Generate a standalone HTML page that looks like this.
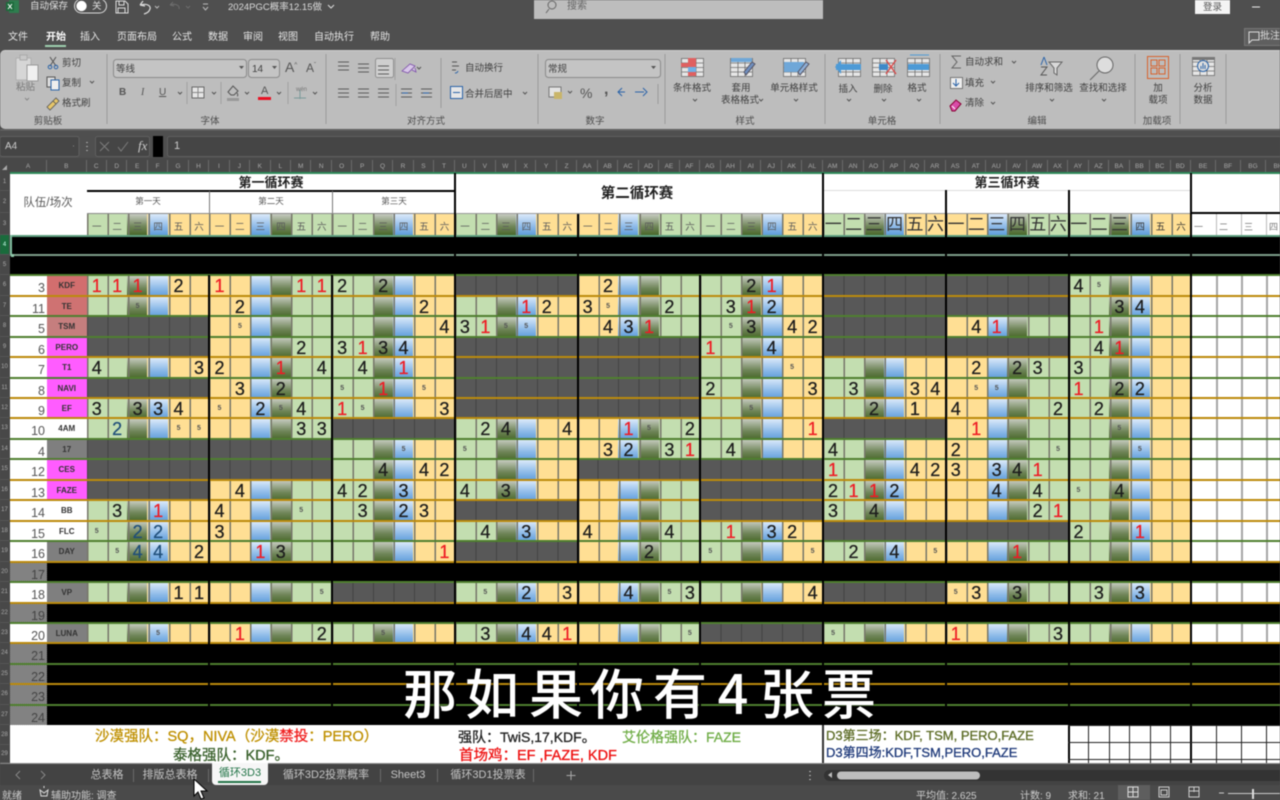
<!DOCTYPE html>
<html lang="zh"><head><meta charset="utf-8"><title>2024PGC概率12.15做</title>
<style>
*{margin:0;padding:0;box-sizing:border-box}
html,body{width:1280px;height:800px;overflow:hidden;background:#4f4f4f}
body{font-family:"Liberation Sans","Noto Sans CJK SC",sans-serif}
#w{position:relative;width:1280px;height:800px;overflow:hidden;filter:blur(.45px)}
.t{position:absolute;white-space:nowrap;line-height:1}
.c{transform:translateX(-50%)}
.box{position:absolute}
/* ribbon text */
.m{color:#e4e4e4;font-size:10px;margin-top:2px}
.k{color:#3f3f3f;font-size:9.5px;margin-top:2px}
.v{color:#4c4c4c;font-size:9.5px;margin-top:3px}
/* sheet */
.bk{position:absolute;width:122.75px;--h:20.45px}
.bk:after{content:"";position:absolute;inset:0;background:repeating-linear-gradient(90deg,#77776a 0 1.5px,transparent 1.5px 20.458px)}
.p1{background:linear-gradient(#c6cbc0,#6f8558 60%,#4a682b) 40.92px 0/20.46px var(--h) repeat-y,linear-gradient(#dceafa,#8dbae8 60%,#5f9ddb) 61.38px 0/20.46px var(--h) repeat-y,linear-gradient(90deg,#c3deb0 40.92px,#ffdf94 40.92px)}
.p2{background:linear-gradient(#dceafa,#8dbae8 60%,#5f9ddb) 40.92px 0/20.46px var(--h) repeat-y,linear-gradient(#c6cbc0,#6f8558 60%,#4a682b) 61.38px 0/20.46px var(--h) repeat-y,linear-gradient(90deg,#ffdf94 40.92px,#c3deb0 40.92px)}
.hd{top:214px;height:21px;--h:21px;display:grid;grid-template-columns:repeat(6,20.458px)}
.hd em{font-style:normal;font-size:9.5px;color:#5a5a5a;text-align:center;line-height:27px;position:relative;z-index:1;font-family:"Liberation Sans","Noto Sans CJK SC",sans-serif}
.hd.big em{font-size:17px;line-height:21px;color:#333}
.col{top:276px;height:450px}
.r{position:absolute;left:86.5px;width:1104.75px;height:19.45px;top:calc(276.3px + 20.45px*var(--k));display:grid;grid-template-columns:repeat(54,20.458px)}
.r>*{grid-row:1}
.r i{font-style:normal;font-size:18px;line-height:20px;text-align:center;color:#1c1c1c;-webkit-text-stroke:.25px currentColor}
.r i.e{color:#ee1c25}
.r i.u{color:#1f4e79}
.r i.s{font-size:7px;color:#555;font-weight:bold;-webkit-text-stroke:0}
.r s{display:block;text-decoration:none;background:repeating-linear-gradient(90deg,#444 0 1px,#585858 1px 20.458px)}
.g1{grid-column:1/7}.g2{grid-column:7/13}.g3{grid-column:13/19}.g4{grid-column:19/25}.g5{grid-column:25/31}.g6{grid-column:31/37}.g7{grid-column:37/43}.g8{grid-column:43/49}.g9{grid-column:49/55}
.bl{position:absolute;left:47px;right:0;height:20.45px;top:calc(275.3px + 20.45px*var(--k));background:#000}
.l{position:absolute;left:10px;right:0;height:2px;top:calc(274.3px + 20.45px*var(--k))}
.go{background:#bb8a0c}.gr{background:#4f7f2f}
.vl{position:absolute;width:2px;background:#000}
.a{position:absolute;left:10px;width:37px;height:20.45px;top:calc(275.3px + 20.45px*var(--k));text-align:right;padding-right:2px;font-size:12.5px;color:#555;line-height:26px}
.a.x{background:repeating-conic-gradient(#767676 0 25%,#8e8e8e 0 50%) 0 0/2px 2px;color:#444}
.n{position:absolute;left:47px;width:39.5px;height:19.45px;top:calc(276.3px + 20.45px*var(--k));font-size:8px;font-weight:bold;color:#333;text-align:center;line-height:19px}
.rh{position:absolute;left:0;width:9px;font-size:6px;color:#aaa;text-align:center;height:20.45px;line-height:20px;top:calc(275.3px + 20.45px*var(--k));border-bottom:1px solid #555;background:#484848}
.ch{position:absolute;top:160px;left:86.5px;height:12px;display:grid;grid-template-columns:repeat(54,20.458px) repeat(4,25px);font-size:6.5px;color:#a8a8a8;text-align:center;line-height:13px}
.ch span{border-right:1px solid #6a6a6a}
.note{font-size:14.5px;line-height:1;position:absolute;white-space:nowrap;-webkit-text-stroke:.3px currentColor}
.tab{color:#c4c4c4;font-size:11px}
.sub span{position:absolute;top:0;transform:translateX(-50%);font-size:54px;line-height:54px;color:#fff;font-weight:500;text-shadow:0 0 2px #000}
</style></head><body><div id="w">

<!-- title bar -->
<div class="box" style="left:534px;top:0;width:289px;height:19px;background:#bdbdbd"></div>
<div class="box" style="left:1195px;top:0;width:35px;height:14px;background:#f4f4f4"></div>
<div class="t" style="left:30px;top:2px;color:#e0e0e0;font-size:9.5px">自动保存</div>
<div class="t" style="left:92px;top:2px;color:#ddd;font-size:9.5px">关</div>
<div class="t" style="left:228px;top:3px;color:#dcdcdc;font-size:9.5px">2024PGC概率12.15做</div>
<div class="t" style="left:567px;top:2px;color:#666;font-size:10px">搜索</div>
<div class="t" style="left:1203px;top:3px;color:#555;font-size:9.5px">登录</div>

<!-- menu -->
<div class="t m c" style="left:18px;top:31px">文件</div>
<div class="t m c" style="left:56px;top:31px;font-weight:bold;color:#fff">开始</div>
<div class="box" style="left:45px;top:45px;width:21px;height:2px;background:#9fd0b0"></div>
<div class="t m c" style="left:90px;top:31px">插入</div>
<div class="t m c" style="left:137px;top:31px">页面布局</div>
<div class="t m c" style="left:182px;top:31px">公式</div>
<div class="t m c" style="left:218px;top:31px">数据</div>
<div class="t m c" style="left:253px;top:31px">审阅</div>
<div class="t m c" style="left:288px;top:31px">视图</div>
<div class="t m c" style="left:334px;top:31px">自动执行</div>
<div class="t m c" style="left:380px;top:31px">帮助</div>
<div class="box" style="left:1244px;top:28px;width:40px;height:18px;background:#5f5f5f;border:1px solid #777"></div>
<div class="t" style="left:1260px;top:32px;color:#ddd;font-size:10px">批注</div>

<!-- ribbon -->
<div class="box" style="left:0;top:50px;width:1290px;height:79px;background:#bdbdbd;border-radius:5px;border-top:1px solid #d0d0d0"></div>

<svg class="box" style="left:0;top:0" width="1280" height="160" viewBox="0 0 1280 160" fill="none">
 <defs>
  <g id="tile" stroke="#6d6d6d" stroke-width=".8"><rect x=".5" y=".5" width="22" height="18" fill="#e6e6e6"/><path d="M8 .5v18M15 .5v18M.5 5h22M.5 9.5h22M.5 14h22"/></g>
  <g id="l3" stroke="#5c5c5c" stroke-width="1"><path d="M0 0h11M0 4h11M0 8h11"/></g>
 </defs>
 <!-- logo -->
 <rect x="9" y="0" width="10" height="13" fill="#2f7d4f"/><rect x="6" y="2" width="8" height="9" fill="#1d6b3c"/><path d="M8 4l4 5M12 4l-4 5" stroke="#fff"/>
 <!-- toggle -->
 <rect x="74.5" y="-1" width="32" height="14" rx="7" stroke="#ddd"/><circle cx="81.5" cy="6" r="5.2" fill="#fff"/>
 <!-- save -->
 <path d="M116 1h9l3 3v9h-12zM119 1v4h5V1M118 13V8h7v5" stroke="#ddd"/>
 <!-- undo redo -->
 <path d="M140 5l3-4M140 5l5 1M141 5c6-2 10 1 9 4s-3 4-6 5" stroke="#ddd" stroke-width="1.2"/>
 <path d="M155 6l2 2 2-2" stroke="#bbb"/>
 <path d="M170 5l3-3M170 5l4 1M171 5c5-2 9 1 8 4" stroke="#6d6d6d"/>
 <path d="M186 6l2 2 2-2" stroke="#6d6d6d"/>
 <path d="M203 4h5M203 7l2.500 3 2.500-3" stroke="#bbb"/>
 <path d="M328 5l3 3 3-3" stroke="#ddd"/>
 <!-- search -->
 <circle cx="552" cy="5" r="4" stroke="#666"/><path d="M549 9l-3 4" stroke="#666"/>
 <!-- min -->
 <path d="M1252 7h8" stroke="#eee"/>
 <path d="M1249 32h10v8h-7l-3 3z" stroke="#ddd"/>

 <!-- separators -->
 <path d="M107 54v70M326 54v70M538 54v70M665 54v70M825 54v70M940 54v70M1135 54v70M1180 54v70M1226 54v70M441 58v50" stroke="#9a9a9a"/>
 <!-- paste -->
 <rect x="16" y="58" width="15" height="22" fill="#d6d6d6" stroke="#b0b0b0"/><rect x="20" y="55" width="7" height="5" fill="#c8c8c8" stroke="#aaa"/><rect x="27" y="65" width="11" height="16" fill="#f0f0f0" stroke="#999"/>
 <path d="M25 98l2 2 2-2" stroke="#888"/>
 <!-- scissors -->
 <path d="M50 57l6 9M56 57l-6 9" stroke="#555"/><circle cx="50" cy="67" r="1.8" stroke="#2a63a8"/><circle cx="56" cy="67" r="1.8" stroke="#2a63a8"/>
 <!-- copy -->
 <rect x="47" y="77" width="8" height="10" stroke="#555" fill="#ddd"/><rect x="51" y="80" width="8" height="10" stroke="#2a63a8" fill="#eee"/>
 <path d="M90 81l2 2 2-2" stroke="#555"/>
 <!-- brush -->
 <path d="M47 107l6-6 3 3-6 6zM53 101l3-3 3 3-3 3" fill="#e6c66a" stroke="#555" stroke-width=".8"/>
 <!-- font boxes -->
 <rect x="113.5" y="59.5" width="133" height="18" rx="3" fill="#c4c4c4" stroke="#8a8a8a"/>
 <rect x="248.5" y="59.5" width="31" height="18" rx="3" fill="#c4c4c4" stroke="#8a8a8a"/>
 <path d="M239 66l2.500 3 2.500-3M272 66l2.500 3 2.500-3" fill="#555"/>
 <path d="M178 92l2 2 2-2M212 92l2 2 2-2M245 92l2 2 2-2M277 92l2 2 2-2M313 92l2 2 2-2" stroke="#555"/>
 <path d="M187 82v22M221 82v22M288 82v22M395 58v22M396 84v22" stroke="#a0a0a0"/>
 <rect x="192" y="87" width="12" height="11" fill="#e6e6e6" stroke="#666"/><path d="M198 87v11M192 92.500h12" stroke="#888"/>
 <path d="M228 92l5-6 5 5-4 4h-3zM237 93c1 1 1 3 0 3" stroke="#555"/><rect x="227" y="98" width="12" height="3" fill="#999"/>
 <rect x="258" y="97" width="13" height="3" fill="#e81123"/>
 <path d="M294 98h12M300 90v9" stroke="#7a9a9a"/>
 <!-- align rows -->
 <use href="#l3" x="338" y="62"/><use href="#l3" x="358" y="64"/>
 <rect x="375.5" y="58.5" width="18" height="19" rx="2" fill="#cfcfcf" stroke="#8f8f8f"/><use href="#l3" x="378" y="66"/>
 <path d="M402 71l8-7 5 2-7 7zM412 70l4 2-1-4" stroke="#7a4ca8" fill="#d8c7e8" stroke-width=".8"/>
 <path d="M417 67l2 2 2-2" stroke="#555"/>
 <use href="#l3" x="338" y="89"/><use href="#l3" x="358" y="89"/><use href="#l3" x="378" y="89"/>
 <use href="#l3" x="401" y="89"/><path d="M402 93h6" stroke="#2a63a8"/><use href="#l3" x="421" y="89"/><path d="M423 93h6" stroke="#2a63a8"/>
 <path d="M452 62h5M452 66h7M452 70h4" stroke="#555"/><path d="M458 71a3 3 0 0 1-3 2" stroke="#2a63a8"/>
 <rect x="450.5" y="86.500" width="12" height="12" fill="#e6e6e6" stroke="#2a63a8"/><path d="M453 92.500h7" stroke="#2a63a8"/>
 <path d="M523 92l2 2 2-2" stroke="#555"/>
 <!-- number -->
 <rect x="545.5" y="59.500" width="115" height="18" rx="3" fill="#c4c4c4" stroke="#8a8a8a"/><path d="M651 66l2.500 3 2.500-3" fill="#555"/>
 <rect x="549" y="87" width="12" height="10" fill="#e3e3e3" stroke="#777"/><rect x="554" y="92" width="8" height="7" fill="#c9b56a"/>
 <path d="M568 91l2 2 2-2" stroke="#555"/>
 <path d="M622 88l-4 4 4 4M618 92h7M643 96l4-4-4-4M635 92h9" stroke="#2a63a8"/>
 <path d="M658 84v20" stroke="#9a9a9a"/>
 <!-- styles -->
 <use href="#tile" x="681" y="58"/><rect x="688" y="58" width="8" height="9" fill="#e06060"/><rect x="681" y="63" width="7" height="4" fill="#e06060"/><rect x="688" y="67" width="8" height="5" fill="#6fb0e6"/><rect x="688" y="72" width="8" height="4" fill="#e06060"/>
 <use href="#tile" x="730" y="58"/><rect x="731" y="58" width="21" height="4" fill="#6fa7d8"/><path d="M752 62l-8 10 2 3 9-11z" fill="#6f8fc0" stroke="#556"/>
 <use href="#tile" x="783" y="58"/><rect x="784" y="62" width="20" height="10" fill="#6fa7d8"/><path d="M806 62l-8 10 2 3 9-11z" fill="#8fb0d8" stroke="#556"/>
 <!-- cells -->
 <use href="#tile" x="838" y="58"/><path d="M836 67h25" stroke="#4d9ad6" stroke-width="6"/><path d="M841 60l-6 7 6 7" fill="#4d9ad6"/>
 <use href="#tile" x="872" y="58"/><rect x="879" y="64" width="9" height="6" fill="#3f88c8"/><path d="M886 60l10 14M896 60l-10 14" stroke="#d94a4a" stroke-width="1.4"/>
 <use href="#tile" x="907" y="58"/><rect x="908" y="64" width="21" height="6" fill="#4d9ad6"/><path d="M910 55h19" stroke="#4d9ad6"/>
 <path d="M847 99l2 2 2-2M882 99l2 2 2-2M917 99l2 2 2-2M693 99l2 2 2-2M794 99l2 2 2-2M759 99l2 2 2-2M1050 99l2 2 2-2M1102 99l2 2 2-2" stroke="#555"/>
 <!-- editing -->
 <path d="M961 56h-9l5 6-5 6h9" stroke="#666"/><path d="M1012 61l2 2 2-2M991 81l2 2 2-2M991 102l2 2 2-2" stroke="#555"/>
 <rect x="950.5" y="77.500" width="12" height="11" fill="#eee" stroke="#777"/><path d="M956 79v7M953 83l3 3 3-3" stroke="#2a63a8"/>
 <path d="M950 106l6-6 5 4-6 7h-3z" fill="#d94ca8" stroke="#803"/><path d="M952 106l3 3" stroke="#fff"/>
 <path d="M1044 57l-3 8M1044 57l3 8" stroke="#2a63a8"/><path d="M1041 67h6l-6 8h6" stroke="#555"/><path d="M1049 62h13l-5 6v7l-3-2v-5z" fill="#d9d9d9" stroke="#666"/>
 <circle cx="1105" cy="65" r="8" fill="#ddd" stroke="#666"/><path d="M1099 71l-9 9" stroke="#666"/>
 <!-- addin -->
 <rect x="1147.5" y="56.500" width="21" height="22" fill="none" stroke="#d8632d"/><path d="M1151 60h6v6h-6zM1159 60h6v6h-6zM1151 68h6v6h-6zM1159 68h6v6h-6z" stroke="#d8632d"/>
 <use href="#tile" x="1192" y="57"/><rect x="1192" y="57" width="23" height="3" fill="#777"/><circle cx="1203" cy="66" r="5.500" fill="#ddd" stroke="#2a63a8"/><path d="M1201 69v-3M1203 69v-6M1205 69v-4" stroke="#2a63a8"/>

 <!-- formula row -->
 <path d="M0 130h1280" stroke="#6a6a6a"/>
 <rect x="0" y="136.500" width="79" height="20" rx="2" fill="#454545" stroke="#606060"/>
 <rect x="95.5" y="136.500" width="54" height="20" rx="2" fill="#454545" stroke="#606060"/>
 <rect x="153" y="136" width="10" height="21" fill="#000"/>
 <rect x="167.5" y="136.500" width="1120" height="20" rx="2" fill="#454545" stroke="#606060"/>
 <path d="M87 142v1M87 146v1M87 150v1" stroke="#bbb" stroke-width="1.5"/>
 <path d="M100 142l9 9M109 142l-9 9M118 147l3 4 7-9" stroke="#7c7c7c"/>
 <path d="M73 146h1" stroke="#888"/>
</svg>

<div class="t" style="left:16px;top:83px;color:#777;font-size:9.5px">粘贴</div>
<div class="t k" style="left:62px;top:57px">剪切</div>
<div class="t k" style="left:62px;top:77px">复制</div>
<div class="t k" style="left:62px;top:97px">格式刷</div>
<div class="t v c" style="left:48px;top:114px">剪贴板</div>
<div class="t k" style="left:116px;top:63px">等线</div>
<div class="t k" style="left:252px;top:63px;font-size:10px">14</div>
<div class="t" style="left:285px;top:60px;font-size:14px;color:#555">A<sup style="font-size:6px">^</sup></div>
<div class="t" style="left:306px;top:62px;font-size:12px;color:#555">A<sup style="font-size:6px">ˇ</sup></div>
<div class="t" style="left:119px;top:88px;font-size:10px;font-weight:bold;color:#555">B</div>
<div class="t" style="left:141px;top:88px;font-size:10px;font-style:italic;font-family:'Liberation Serif',serif;color:#555">I</div>
<div class="t" style="left:159px;top:88px;font-size:10px;text-decoration:underline;color:#555">U</div>
<div class="t" style="left:261px;top:86px;font-size:11px;color:#555">A</div>
<div class="t" style="left:296px;top:87px;font-size:6px;color:#777">wén</div>
<div class="t v c" style="left:210px;top:114px">字体</div>
<div class="t k" style="left:465px;top:62px">自动换行</div>
<div class="t k" style="left:465px;top:88px">合并后居中</div>
<div class="t v c" style="left:426px;top:114px">对齐方式</div>
<div class="t k" style="left:548px;top:63px">常规</div>
<div class="t" style="left:580px;top:86px;font-size:14px;color:#555">%</div>
<div class="t" style="left:604px;top:82px;font-size:16px;font-weight:bold;color:#555">,</div>
<div class="t v c" style="left:595px;top:114px">数字</div>
<div class="t k c" style="left:692px;top:82px">条件格式</div>
<div class="t k c" style="left:741px;top:82px">套用</div>
<div class="t k c" style="left:740px;top:94px">表格格式</div>
<div class="t k c" style="left:794px;top:82px">单元格样式</div>
<div class="t v c" style="left:745px;top:114px">样式</div>
<div class="t k c" style="left:848px;top:83px">插入</div>
<div class="t k c" style="left:883px;top:83px">删除</div>
<div class="t k c" style="left:917px;top:82px">格式</div>
<div class="t v c" style="left:882px;top:114px">单元格</div>
<div class="t k" style="left:965px;top:56px">自动求和</div>
<div class="t k" style="left:965px;top:77px">填充</div>
<div class="t k" style="left:965px;top:97px">清除</div>
<div class="t k c" style="left:1049px;top:82px">排序和筛选</div>
<div class="t k c" style="left:1103px;top:82px">查找和选择</div>
<div class="t v c" style="left:1037px;top:114px">编辑</div>
<div class="t k c" style="left:1158px;top:82px">加</div>
<div class="t k c" style="left:1158px;top:94px">载项</div>
<div class="t v c" style="left:1157px;top:114px">加载项</div>
<div class="t k c" style="left:1203px;top:82px">分析</div>
<div class="t k c" style="left:1203px;top:94px">数据</div>

<div class="t" style="left:5px;top:142px;color:#ccc;font-size:10px">A4</div>
<div class="t" style="left:138px;top:139px;color:#ccc;font-size:13px;font-style:italic;font-family:'Liberation Serif',serif">fx</div>
<div class="t" style="left:174px;top:141px;color:#ccc;font-size:11px">1</div>

<!-- col headers -->
<div class="box" style="left:0;top:158px;width:1280px;height:14px;background:#484848"></div>
<div class="box" style="left:10px;top:160px;width:37px;height:12px;border-right:1px solid #6a6a6a;color:#a8a8a8;font-size:6.5px;text-align:center;line-height:13px">A</div>
<div class="box" style="left:47px;top:160px;width:39.5px;height:12px;border-right:1px solid #6a6a6a;color:#a8a8a8;font-size:6.5px;text-align:center;line-height:13px">B</div>
<div class="ch"><span>C</span><span>D</span><span>E</span><span>F</span><span>G</span><span>H</span><span>I</span><span>J</span><span>K</span><span>L</span><span>M</span><span>N</span><span>O</span><span>P</span><span>Q</span><span>R</span><span>S</span><span>T</span><span>U</span><span>V</span><span>W</span><span>X</span><span>Y</span><span>Z</span><span>AA</span><span>AB</span><span>AC</span><span>AD</span><span>AE</span><span>AF</span><span>AG</span><span>AH</span><span>AI</span><span>AJ</span><span>AK</span><span>AL</span><span>AM</span><span>AN</span><span>AO</span><span>AP</span><span>AQ</span><span>AR</span><span>AS</span><span>AT</span><span>AU</span><span>AV</span><span>AW</span><span>AX</span><span>AY</span><span>AZ</span><span>BA</span><span>BB</span><span>BC</span><span>BD</span><span>BE</span><span>BF</span><span>BG</span><span>BH</span></div>
<div class="box" style="left:2px;top:165px;border-left:5px solid transparent;border-bottom:5px solid #aaa"></div>

<!-- sheet white base -->
<div class="box" style="left:10px;top:172px;width:1270px;height:104px;background:#fff"></div>
<div class="box" style="left:0;top:172px;width:10px;height:628px;background:#484848"></div>
<div class="box" style="left:10px;top:276px;width:37px;height:450px;background:#fff"></div>
<div class="box" style="left:47px;top:276px;width:39.5px;height:450px;background:#fff"></div>
<div class="box" style="left:1191px;top:276px;width:89px;height:450px;background:#fff"></div>
<div class="box" style="left:1215.5px;top:276px;width:2px;height:450px;background:#a5a5a5"></div>
<div class="box" style="left:1240.5px;top:276px;width:2px;height:450px;background:#a5a5a5"></div>
<div class="box" style="left:1265.5px;top:276px;width:2px;height:450px;background:#a5a5a5"></div>

<!-- header -->
<div class="t c" style="left:48px;top:198px;font-size:11.5px;color:#5a5a5a">队伍/场次</div>
<div class="t c" style="left:271px;top:176px;font-size:13px;font-weight:bold;color:#222">第一循环赛</div>
<div class="box" style="left:87px;top:189.5px;width:368px;height:2px;background:#000"></div>
<div class="t c" style="left:148px;top:197px;font-size:8.5px;color:#555">第一天</div>
<div class="t c" style="left:271px;top:197px;font-size:8.5px;color:#555">第二天</div>
<div class="t c" style="left:394px;top:197px;font-size:8.5px;color:#555">第三天</div>
<div class="t c" style="left:637px;top:187px;font-size:14.5px;font-weight:bold;color:#222">第二循环赛</div>
<div class="t c" style="left:1007px;top:176px;font-size:13px;font-weight:bold;color:#222">第三循环赛</div>
<div class="box" style="left:824px;top:190px;width:367px;height:1px;background:#ddd"></div>
<div class="box" style="left:87px;top:212.5px;width:368px;height:1px;background:#888"></div>
<div class="box" style="left:456px;top:212.5px;width:735px;height:1px;background:#999"></div>
<div class="box" style="left:1191px;top:212px;width:89px;height:2px;background:#000"></div>
<div class="box" style="left:209px;top:191px;width:1px;height:22px;background:#777"></div>
<div class="box" style="left:332px;top:191px;width:1px;height:22px;background:#777"></div>
<div class="box" style="left:10px;top:172px;width:1270px;height:2px;background:#2f8a5a"></div>

<div class="bk p1 hd" style="left:86.5px"><em>一</em><em>二</em><em>三</em><em>四</em><em>五</em><em>六</em></div>
<div class="bk p2 hd" style="left:209.25px"><em>一</em><em>二</em><em>三</em><em>四</em><em>五</em><em>六</em></div>
<div class="bk p1 hd" style="left:332px"><em>一</em><em>二</em><em>三</em><em>四</em><em>五</em><em>六</em></div>
<div class="bk p1 hd" style="left:454.75px"><em>一</em><em>二</em><em>三</em><em>四</em><em>五</em><em>六</em></div>
<div class="bk p2 hd" style="left:577.5px"><em>一</em><em>二</em><em>三</em><em>四</em><em>五</em><em>六</em></div>
<div class="bk p1 hd" style="left:700.25px"><em>一</em><em>二</em><em>三</em><em>四</em><em>五</em><em>六</em></div>
<div class="bk p1 hd big" style="left:823px"><em>一</em><em>二</em><em>三</em><em>四</em><em>五</em><em>六</em></div>
<div class="bk p2 hd big" style="left:945.75px"><em>一</em><em>二</em><em>三</em><em>四</em><em>五</em><em>六</em></div>
<div class="bk p1 hd big" style="left:1068.5px"><em>一</em><em>二</em><em>三</em><em style="font-size:9.5px;line-height:27px">四</em><em style="font-size:9.5px;line-height:27px">五</em><em style="font-size:9.5px;line-height:27px">六</em></div>
<div class="t" style="left:1194px;top:223px;font-size:9px;color:#777">一</div>
<div class="t" style="left:1219px;top:223px;font-size:9px;color:#777">二</div>
<div class="t" style="left:1244px;top:223px;font-size:9px;color:#777">三</div>
<div class="t" style="left:1269px;top:223px;font-size:9px;color:#777">四</div>
<div class="box" style="left:1216px;top:214px;width:1px;height:21px;background:#bbb"></div>
<div class="box" style="left:1241px;top:214px;width:1px;height:21px;background:#bbb"></div>
<div class="box" style="left:1266px;top:214px;width:1px;height:21px;background:#bbb"></div>

<!-- black rows 4,5 -->
<div class="box" style="left:10px;top:235px;width:1270px;height:41px;background:#000"></div>
<div class="box" style="left:10px;top:234.5px;width:1270px;height:2px;background:#5f9f80"></div>
<div class="box" style="left:10px;top:253.500px;width:1270px;height:2px;background:#7f9f8c"></div>
<div class="box" style="left:10px;top:235px;width:1.500px;height:20px;background:#7fbf9f"></div>
<div class="box" style="left:11px;top:254px;width:3px;height:3px;background:#8fc9a9"></div>

<!-- colored columns -->
<div class="bk p1 col" style="left:86.5px"></div>
<div class="bk p2 col" style="left:209.25px"></div>
<div class="bk p1 col" style="left:332px"></div>
<div class="bk p1 col" style="left:454.75px"></div>
<div class="bk p2 col" style="left:577.5px"></div>
<div class="bk p1 col" style="left:700.25px"></div>
<div class="bk p1 col" style="left:823px"></div>
<div class="bk p2 col" style="left:945.75px"></div>
<div class="bk p1 col" style="left:1068.5px"></div>

<!-- rows -->
<div class="r" style="--k:0"><s class="g4"></s><s class="g7"></s><s class="g8"></s>
<i class="e" style="grid-column:1">1</i><i class="e" style="grid-column:2">1</i><i class="e" style="grid-column:3">1</i><i style="grid-column:5">2</i><i class="e" style="grid-column:7">1</i><i class="e" style="grid-column:11">1</i><i class="e" style="grid-column:12">1</i><i style="grid-column:13">2</i><i style="grid-column:15">2</i><i style="grid-column:26">2</i><i style="grid-column:33">2</i><i class="e" style="grid-column:34">1</i><i style="grid-column:49">4</i><i class="s" style="grid-column:50">5</i></div>
<div class="r" style="--k:1"><s class="g7"></s><s class="g8"></s>
<i class="s" style="grid-column:3">5</i><i style="grid-column:8">2</i><i style="grid-column:17">2</i><i class="e" style="grid-column:22">1</i><i style="grid-column:23">2</i><i style="grid-column:25">3</i><i class="s" style="grid-column:26">5</i><i style="grid-column:29">2</i><i style="grid-column:32">3</i><i class="e" style="grid-column:33">1</i><i style="grid-column:34">2</i><i style="grid-column:51">3</i><i style="grid-column:52">4</i></div>
<div class="r" style="--k:2"><s class="g1"></s><s class="g7"></s>
<i class="s" style="grid-column:8">5</i><i style="grid-column:18">4</i><i style="grid-column:19">3</i><i class="e" style="grid-column:20">1</i><i class="s" style="grid-column:21">5</i><i class="s" style="grid-column:22">5</i><i style="grid-column:26">4</i><i style="grid-column:27">3</i><i class="e" style="grid-column:28">1</i><i class="s" style="grid-column:32">5</i><i style="grid-column:33">3</i><i style="grid-column:35">4</i><i style="grid-column:36">2</i><i style="grid-column:44">4</i><i class="e" style="grid-column:45">1</i><i class="e" style="grid-column:50">1</i></div>
<div class="r" style="--k:3"><s class="g1"></s><s class="g4"></s><s class="g5"></s><s class="g7"></s><s class="g8"></s>
<i style="grid-column:11">2</i><i style="grid-column:13">3</i><i class="e" style="grid-column:14">1</i><i style="grid-column:15">3</i><i style="grid-column:16">4</i><i class="e" style="grid-column:31">1</i><i style="grid-column:34">4</i><i style="grid-column:50">4</i><i class="e" style="grid-column:51">1</i></div>
<div class="r" style="--k:4"><s class="g4"></s><s class="g5"></s>
<i style="grid-column:1">4</i><i style="grid-column:6">3</i><i style="grid-column:7">2</i><i class="e" style="grid-column:10">1</i><i style="grid-column:12">4</i><i style="grid-column:14">4</i><i class="e" style="grid-column:16">1</i><i class="s" style="grid-column:35">5</i><i style="grid-column:44">2</i><i style="grid-column:46">2</i><i style="grid-column:47">3</i><i style="grid-column:49">3</i></div>
<div class="r" style="--k:5"><s class="g1"></s><s class="g4"></s><s class="g5"></s>
<i style="grid-column:8">3</i><i style="grid-column:10">2</i><i class="s" style="grid-column:13">5</i><i class="e" style="grid-column:15">1</i><i class="s" style="grid-column:17">5</i><i style="grid-column:31">2</i><i style="grid-column:36">3</i><i style="grid-column:38">3</i><i style="grid-column:41">3</i><i style="grid-column:42">4</i><i class="s" style="grid-column:44">5</i><i class="s" style="grid-column:45">5</i><i class="e" style="grid-column:49">1</i><i style="grid-column:51">2</i><i style="grid-column:52">2</i></div>
<div class="r" style="--k:6"><s class="g4"></s><s class="g5"></s>
<i style="grid-column:1">3</i><i style="grid-column:3">3</i><i style="grid-column:4">3</i><i style="grid-column:5">4</i><i class="s" style="grid-column:7">5</i><i style="grid-column:9">2</i><i class="s" style="grid-column:10">5</i><i style="grid-column:11">4</i><i class="e" style="grid-column:13">1</i><i class="s" style="grid-column:14">5</i><i style="grid-column:18">3</i><i class="s" style="grid-column:33">5</i><i style="grid-column:39">2</i><i style="grid-column:41">1</i><i style="grid-column:43">4</i><i style="grid-column:48">2</i><i style="grid-column:50">2</i></div>
<div class="r" style="--k:7"><s class="g3"></s><s class="g7"></s>
<i class="u" style="grid-column:2">2</i><i class="s" style="grid-column:5">5</i><i class="s" style="grid-column:6">5</i><i style="grid-column:11">3</i><i style="grid-column:12">3</i><i style="grid-column:20">2</i><i style="grid-column:21">4</i><i style="grid-column:24">4</i><i class="e" style="grid-column:27">1</i><i class="s" style="grid-column:28">5</i><i style="grid-column:30">2</i><i class="e" style="grid-column:36">1</i><i class="e" style="grid-column:44">1</i><i class="s" style="grid-column:51">5</i></div>
<div class="r" style="--k:8"><s class="g1"></s><s class="g2"></s>
<i class="s" style="grid-column:16">5</i><i class="s" style="grid-column:19">5</i><i style="grid-column:26">3</i><i style="grid-column:27">2</i><i style="grid-column:29">3</i><i class="e" style="grid-column:30">1</i><i style="grid-column:32">4</i><i style="grid-column:37">4</i><i style="grid-column:43">2</i><i class="s" style="grid-column:48">5</i><i class="s" style="grid-column:52">5</i></div>
<div class="r" style="--k:9"><s class="g1"></s><s class="g2"></s><s class="g5"></s><s class="g6"></s>
<i style="grid-column:15">4</i><i style="grid-column:17">4</i><i style="grid-column:18">2</i><i class="e" style="grid-column:37">1</i><i style="grid-column:41">4</i><i style="grid-column:42">2</i><i style="grid-column:43">3</i><i style="grid-column:45">3</i><i style="grid-column:46">4</i><i class="e" style="grid-column:47">1</i></div>
<div class="r" style="--k:10"><s class="g1"></s><s class="g6"></s>
<i style="grid-column:8">4</i><i style="grid-column:13">4</i><i style="grid-column:14">2</i><i style="grid-column:16">3</i><i style="grid-column:19">4</i><i style="grid-column:21">3</i><i style="grid-column:37">2</i><i class="e" style="grid-column:38">1</i><i class="e" style="grid-column:39">1</i><i style="grid-column:40">2</i><i style="grid-column:45">4</i><i style="grid-column:47">4</i><i class="s" style="grid-column:49">5</i><i style="grid-column:51">4</i></div>
<div class="r" style="--k:11"><s class="g4"></s><s class="g6"></s>
<i style="grid-column:2">3</i><i class="e" style="grid-column:4">1</i><i style="grid-column:7">4</i><i class="s" style="grid-column:11">5</i><i style="grid-column:14">3</i><i style="grid-column:16">2</i><i style="grid-column:17">3</i><i style="grid-column:37">3</i><i style="grid-column:39">4</i><i style="grid-column:47">2</i><i class="e" style="grid-column:48">1</i></div>
<div class="r" style="--k:12"><s class="g7"></s><s class="g8"></s>
<i class="s" style="grid-column:1">5</i><i class="u" style="grid-column:3">2</i><i class="u" style="grid-column:4">2</i><i style="grid-column:7">3</i><i style="grid-column:20">4</i><i style="grid-column:22">3</i><i style="grid-column:25">4</i><i style="grid-column:29">4</i><i class="e" style="grid-column:32">1</i><i style="grid-column:34">3</i><i style="grid-column:35">2</i><i style="grid-column:49">2</i><i class="e" style="grid-column:52">1</i></div>
<div class="r" style="--k:13"><s class="g4"></s>
<i class="s" style="grid-column:2">5</i><i class="u" style="grid-column:3">4</i><i class="u" style="grid-column:4">4</i><i style="grid-column:6">2</i><i class="e" style="grid-column:9">1</i><i style="grid-column:10">3</i><i class="e" style="grid-column:18">1</i><i style="grid-column:28">2</i><i class="s" style="grid-column:31">5</i><i class="s" style="grid-column:36">5</i><i style="grid-column:38">2</i><i style="grid-column:40">4</i><i class="s" style="grid-column:42">5</i><i class="e" style="grid-column:46">1</i></div>
<div class="r" style="--k:15"><s class="g3"></s><s class="g7"></s>
<i style="grid-column:5">1</i><i style="grid-column:6">1</i><i class="s" style="grid-column:12">5</i><i class="s" style="grid-column:20">5</i><i style="grid-column:22">2</i><i style="grid-column:24">3</i><i style="grid-column:27">4</i><i class="s" style="grid-column:29">5</i><i style="grid-column:30">3</i><i style="grid-column:36">4</i><i class="s" style="grid-column:43">5</i><i style="grid-column:44">3</i><i style="grid-column:46">3</i><i style="grid-column:50">3</i><i style="grid-column:52">3</i></div>
<div class="r" style="--k:17"><s class="g6"></s>
<i class="s" style="grid-column:4">5</i><i class="e" style="grid-column:8">1</i><i style="grid-column:12">2</i><i class="s" style="grid-column:15">5</i><i style="grid-column:20">3</i><i style="grid-column:22">4</i><i style="grid-column:23">4</i><i class="e" style="grid-column:24">1</i><i class="s" style="grid-column:30">5</i><i class="s" style="grid-column:37">5</i><i class="e" style="grid-column:43">1</i><i style="grid-column:48">3</i></div>

<!-- black rows -->
<div class="bl" style="--k:14"></div><div class="bl" style="--k:16"></div>
<div class="bl" style="--k:18"></div><div class="bl" style="--k:19"></div><div class="bl" style="--k:20"></div><div class="bl" style="--k:21"></div>

<!-- col A -->
<div class="a" style="--k:0">3</div><div class="a" style="--k:1">11</div><div class="a" style="--k:2">5</div><div class="a" style="--k:3">6</div><div class="a" style="--k:4">7</div><div class="a" style="--k:5">8</div><div class="a" style="--k:6">9</div><div class="a" style="--k:7">10</div><div class="a" style="--k:8">4</div><div class="a" style="--k:9">12</div><div class="a" style="--k:10">13</div><div class="a" style="--k:11">14</div><div class="a" style="--k:12">15</div><div class="a" style="--k:13">16</div><div class="a x" style="--k:14">17</div><div class="a" style="--k:15">18</div><div class="a x" style="--k:16">19</div><div class="a" style="--k:17">20</div><div class="a x" style="--k:18">21</div><div class="a x" style="--k:19">22</div><div class="a x" style="--k:20">23</div><div class="a x" style="--k:21">24</div>

<!-- col B -->
<div class="n" style="--k:0;background:#d26e6e">KDF</div>
<div class="n" style="--k:1;background:#cf7272">TE</div>
<div class="n" style="--k:2;background:#c57e7e">TSM</div>
<div class="n" style="--k:3;background:#ff5cff">PERO</div>
<div class="n" style="--k:4;background:#ff5cff">T1</div>
<div class="n" style="--k:5;background:#ff5cff">NAVI</div>
<div class="n" style="--k:6;background:#ff5cff">EF</div>
<div class="n" style="--k:7">4AM</div>
<div class="n" style="--k:8;background:#7f7f7f">17</div>
<div class="n" style="--k:9;background:#ff5cff">CES</div>
<div class="n" style="--k:10;background:#ff5cff">FAZE</div>
<div class="n" style="--k:11">BB</div>
<div class="n" style="--k:12">FLC</div>
<div class="n" style="--k:13;background:#7f7f7f">DAY</div>
<div class="n" style="--k:15;background:#7f7f7f">VP</div>
<div class="n" style="--k:17;background:#7f7f7f">LUNA</div>

<!-- horizontal lines -->
<p class="l gr" style="--k:0"></p><p class="l go" style="--k:1"></p><p class="l gr" style="--k:2"></p><p class="l gr" style="--k:3"></p><p class="l go" style="--k:4"></p><p class="l gr" style="--k:5"></p><p class="l go" style="--k:6"></p><p class="l go" style="--k:7"></p><p class="l gr" style="--k:8"></p><p class="l gr" style="--k:9"></p><p class="l go" style="--k:10"></p><p class="l go" style="--k:11"></p><p class="l go" style="--k:12"></p><p class="l gr" style="--k:13"></p><p class="l go" style="--k:14"></p><p class="l gr" style="--k:15"></p><p class="l go" style="--k:16"></p><p class="l gr" style="--k:17"></p><p class="l go" style="--k:18"></p><p class="l gr" style="--k:19"></p><p class="l go" style="--k:20"></p><p class="l gr" style="--k:21"></p>

<!-- vertical black lines -->
<div class="vl" style="left:208.25px;top:275px;height:450px"></div>
<div class="vl" style="left:331px;top:275px;height:450px"></div>
<div class="vl" style="left:453.75px;top:173px;height:552px"></div>
<div class="vl" style="left:576.5px;top:214px;height:511px"></div>
<div class="vl" style="left:699.25px;top:275px;height:450px"></div>
<div class="vl" style="left:822px;top:173px;height:552px"></div>
<div class="vl" style="left:944.75px;top:190px;height:535px"></div>
<div class="vl" style="left:1067.5px;top:190px;height:535px"></div>
<div class="vl" style="left:1190.25px;top:173px;height:552px"></div>

<!-- row headers -->
<div class="rh" style="top:173px;height:18px;line-height:18px">1</div>
<div class="rh" style="top:191px;height:22px;line-height:22px">2</div>
<div class="rh" style="top:213px;height:22px;line-height:22px">3</div>
<div class="rh" style="top:235px;height:20px;line-height:20px;background:#1a6b3c;color:#cfe">4</div>
<div class="rh" style="top:255px;height:20px;line-height:20px">5</div>
<div class="rh" style="--k:0">6</div><div class="rh" style="--k:1">7</div><div class="rh" style="--k:2">8</div><div class="rh" style="--k:3">9</div><div class="rh" style="--k:4">10</div><div class="rh" style="--k:5">11</div><div class="rh" style="--k:6">12</div><div class="rh" style="--k:7">13</div><div class="rh" style="--k:8">14</div><div class="rh" style="--k:9">15</div><div class="rh" style="--k:10">16</div><div class="rh" style="--k:11">17</div><div class="rh" style="--k:12">18</div><div class="rh" style="--k:13">19</div><div class="rh" style="--k:14">20</div><div class="rh" style="--k:15">21</div><div class="rh" style="--k:16">22</div><div class="rh" style="--k:17">23</div><div class="rh" style="--k:18">24</div><div class="rh" style="--k:19">25</div><div class="rh" style="--k:20">26</div><div class="rh" style="--k:21">27</div>
<div class="rh" style="top:725px;height:20px">28</div><div class="rh" style="top:745px;height:18px;line-height:18px">29</div>

<!-- notes -->
<div class="box" style="left:10px;top:725px;width:1270px;height:38px;background:#fff"></div>
<div class="box" style="left:822px;top:725px;width:2px;height:38px;background:#333"></div>
<div class="box" style="left:1067.5px;top:725px;width:2px;height:38px;background:#000"></div>
<div class="box" style="left:1190.25px;top:725px;width:2px;height:38px;background:#000"></div>
<svg class="box" style="left:1068px;top:725px" width="212" height="38" fill="none"><path d="M20.5 0v38M41.5 0v38M61.5 0v38M82.5 0v38M102.5 0v38M148.5 0v38M173.5 0v38M198.5 0v38M0 .5h212M0 17.5h212M0 34.5h212" stroke="#222" stroke-width="1"/></svg>
<div class="note" style="left:95px;top:730px;color:#bf9000">沙漠强队：SQ，NIVA（沙漠<span style="color:#f01c1c">禁投</span>：PERO）</div>
<div class="note" style="left:173px;top:749px;color:#375f2a">泰格强队：KDF。</div>
<div class="note" style="left:458px;top:730px;color:#222;font-size:14px">强队：TwiS,17,KDF。</div>
<div class="note" style="left:459px;top:749px;color:#ee1111;font-size:14.5px">首场鸡：EF ,FAZE, KDF</div>
<div class="note" style="left:622px;top:730px;color:#70ad47;font-size:14px">艾伦格强队：FAZE</div>
<div class="note" style="left:826px;top:729px;color:#5b6b24;font-size:13px">D3第三场：KDF, TSM, PERO,FAZE</div>
<div class="note" style="left:826px;top:746px;color:#1f3a7a;font-size:13px">D3第四场:KDF,TSM,PERO,FAZE</div>

<!-- tabs -->
<div class="box" style="left:0;top:763px;width:1280px;height:22px;background:#434343;border-top:1px solid #8a8a8a"></div>
<div class="box" style="left:0;top:785px;width:1280px;height:15px;background:#4a4a4a"></div>
<div class="box" style="left:212px;top:763px;width:56px;height:22px;background:#f6f6f6;border-radius:0 0 4px 4px"></div>
<div class="box" style="left:218px;top:781px;width:43px;height:2px;background:#217346"></div>
<svg class="box" style="left:0;top:763px" width="1280" height="37" fill="none">
 <path d="M20 8l-4 4 4 4M41 8l4 4-4 4" stroke="#888"/>
 <path d="M133.500 6v13M208.500 6v13M380.500 6v13M437.500 6v13M533.500 6v13" stroke="#6a6a6a"/>
 <path d="M571 8v9M566.500 12.500h9" stroke="#aaa"/>
 <path d="M810 8v1M810 12v1M810 16v1" stroke="#ccc" stroke-width="1.5"/>
 <rect x="824" y="7" width="470" height="11" rx="5.5" fill="#333"/>
 <path d="M832 9v6l-4-3z" fill="#bbb"/>
 <rect x="837" y="8.500" width="143" height="8" rx="4" fill="#bdbdbd"/>
 <path d="M40 27l4 3 4-3-1 6h-6zM44 23v2" stroke="#ddd"/>
 <rect x="1118" y="22" width="32" height="15" fill="#5e5e5e"/>
 <path d="M1128 24h10v10h-10zM1133 24v10M1128 29h10" stroke="#ddd"/>
 <path d="M1159 24h10v10h-10zM1161 27h6v5h-6z" stroke="#ccc"/>
 <path d="M1189 24h10v10h-10zM1194 24v5M1189 28h10" stroke="#ccc"/>
 <path d="M1219 30h5M1228 30.500h52" stroke="#ccc"/>
 <rect x="1252" y="26" width="2" height="10" fill="#ddd"/>
</svg>
<div class="t tab c" style="left:107px;top:770px">总表格</div>
<div class="t tab c" style="left:170px;top:770px">排版总表格</div>
<div class="t c" style="left:240px;top:768px;font-size:11px;color:#217346">循环3D3</div>
<div class="t tab c" style="left:326px;top:770px">循环3D2投票概率</div>
<div class="t tab c" style="left:408px;top:770px">Sheet3</div>
<div class="t tab c" style="left:488px;top:770px">循环3D1投票表</div>
<div class="t" style="left:2px;top:792px;font-size:10px;color:#ccc">就绪</div>
<div class="t" style="left:51px;top:792px;font-size:10px;color:#ccc">辅助功能: 调查</div>
<div class="t" style="left:916px;top:792px;font-size:10px;color:#ccc">平均值: 2.625</div>
<div class="t" style="left:1020px;top:792px;font-size:10px;color:#ccc">计数: 9</div>
<div class="t" style="left:1068px;top:792px;font-size:10px;color:#ccc">求和: 21</div>

<!-- cursor -->
<svg class="box" style="left:193px;top:778px" width="16" height="22"><path d="M1 1v17l4-4 3 7 3-1-3-7h6z" fill="#fff" stroke="#000"/></svg>

<!-- subtitle -->
<div class="box sub" style="left:0;top:664px;width:1280px;height:56px;font-family:'Noto Sans CJK SC','WenQuanYi Zen Hei',sans-serif">
<span style="left:430px">那</span><span style="left:492px">如</span><span style="left:556px">果</span><span style="left:617px">你</span><span style="left:680px">有</span><span style="left:733px">4</span><span style="left:787px">张</span><span style="left:849px">票</span>
</div>
</div></body></html>
